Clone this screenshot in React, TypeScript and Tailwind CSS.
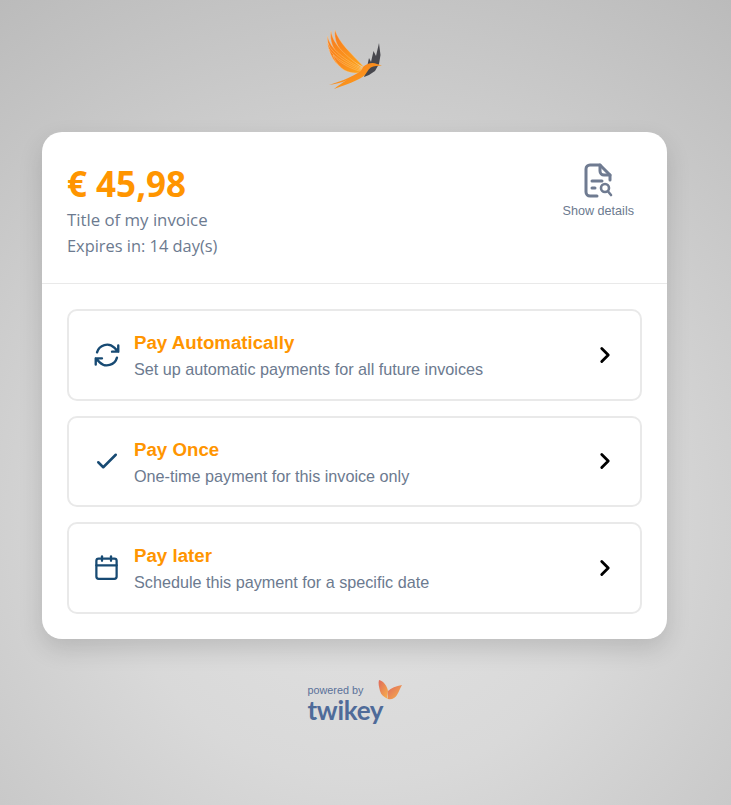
import React from 'react';
import { ChevronRight, Calendar } from 'lucide-react';
import { HiOutlineArrowPath } from 'react-icons/hi2';
import { HiOutlineCheck } from 'react-icons/hi';

const options = [
  { title: 'Pay Automatically', text: 'Set up automatic payments for all future invoices', icon: <HiOutlineArrowPath className="w-[30px] h-[30px] [&_path]:[stroke-width:1.9px]" /> },
  { title: 'Pay Once', text: 'One-time payment for this invoice only', icon: <HiOutlineCheck className="w-[30px] h-[30px]" /> },
  { title: 'Pay later', text: 'Schedule this payment for a specific date', icon: <Calendar size={27} strokeWidth={2} className="ml-[1px] mr-[2px] -mt-[1px]" /> },
];

const feathers = [
  'M34 15C38 28 50 38 63 52C48 46 32 34 34 15Z',
  'M30 16C32 30 46 42 62 53C44 49 27 36 30 16Z',
  'M26.5 21C29 34 44 45 62 54C42 52 26 40 26.5 21Z',
  'M26.5 28C31 39 46 48 62 55C42 55 29 45 26.5 28Z',
  'M28 34C34 44 48 51 62 56C44 58 32 50 28 34Z',
  'M32 40C38 48 50 54 62 57C46 61 36 52 32 40Z',
];

function Bird() {
  return (
    <svg width="56" height="62" viewBox="26 13 56 62" fill="none">
      <defs>
        <linearGradient id="wing" x1="0" y1="0" x2="1" y2="1">
          <stop offset="0" stopColor="#f8791e" />
          <stop offset="1" stopColor="#fca61c" />
        </linearGradient>
      </defs>
      <path d="M63 62L66 52L68 43L70 47L72.5 36L75 41L78 28L79.5 40L78 49L74 56L68 60Z" fill="#47474d" />
      {feathers.map((d) => (
        <path key={d} d={d} fill="url(#wing)" stroke="#fcc98a" strokeWidth="0.4" />
      ))}
      <path d="M62 52C66 48 72 47 76 49L81 50.5L75 51C71 51 68 53 66 57C64 61 60 63 56 65C48 69 40 71 33 74C38 70 41 68 46 65C40 68 34 69 28 70C38 67 48 63 55 59C59 57 61 55 62 52Z" fill="url(#wing)" />
    </svg>
  );
}

function DetailsIcon() {
  return (
    <svg width="30" height="36" viewBox="0 0 30 36" fill="none" stroke="#6f7b91" strokeWidth="3" strokeLinecap="round" strokeLinejoin="round">
      <path d="M14 33H7a4 4 0 0 1-4-4V6a4 4 0 0 1 4-4h10l10 10v5" />
      <path d="M17 2v6a4 4 0 0 0 4 4h6" />
      <path d="M9 18h10" />
      <path d="M9 25h3" />
      <circle cx="22" cy="25" r="4" strokeWidth="2.6" />
      <path d="M25.5 29l2.5 3" strokeWidth="2.6" />
    </svg>
  );
}

function Butterfly() {
  return (
    <svg width="24" height="20" viewBox="0 0 24 20">
      <defs>
        <linearGradient id="fly" x1="0" y1="0" x2="1" y2="1">
          <stop offset="0" stopColor="#df6a5c" />
          <stop offset="1" stopColor="#f8b24c" />
        </linearGradient>
      </defs>
      <path d="M1 0C5 1 9 5 10 11C9 15 9 17 10 19C6 17 3 15 2 11C1 7 0 3 1 0Z" fill="url(#fly)" />
      <path d="M10 11C13 8 18 6 24 5C22 8 21 12 19 15C17 18 14 20 10 19C10 16 9 14 10 11Z" fill="url(#fly)" />
    </svg>
  );
}

export default function App() {
  return (
    <div className="min-h-[805px] w-full bg-[radial-gradient(circle_at_50%_65%,#e2e2e2_0%,#d9d9d9_40%,#bbbbbb_100%)] font-['Liberation_Sans',sans-serif]">
      <div className="w-[709px] pt-[28px] flex flex-col items-center">
        <Bird />
        <div className="mt-[42px] w-[625px] rounded-[20px] bg-white shadow-[0_10px_25px_rgba(0,0,0,0.14)]">
          <div className="h-[152px] border-b border-[#e9e9e9] pl-[25px] pr-[33px] pt-[29px] flex justify-between">
            <div className="font-['Open_Sans',sans-serif]">
              <div className="text-[35px] leading-[46px] font-bold text-[#ff9500]">€ 45,98</div>
              <div className="text-[16.8px] leading-[26px] text-[#6c7a8f]">Title of my invoice</div>
              <div className="text-[16.4px] leading-[26px] text-[#6c7a8f]">Expires in: 14 day(s)</div>
            </div>
            <div className="flex flex-col items-center pt-[2px]">
              <DetailsIcon />
              <span className="mt-[4px] text-[12.6px] leading-[16px] text-[#6c7a8f]">Show details</span>
            </div>
          </div>
          <div className="px-[25px] py-[25px] flex flex-col gap-[15px]">
            {options.map(({ title, text, icon }) => (
              <div key={title} className="h-[91.5px] rounded-[10px] border-2 border-[#e9e9e9] flex items-center pl-[23px] pr-[22px]">
                <span className="text-[#174a73] shrink-0">{icon}</span>
                <div className="ml-[12px] flex-1 pt-[2px]">
                  <div className="text-[18.7px] leading-[27px] font-bold text-[#ff9500]">{title}</div>
                  <div className="text-[16.2px] leading-[26px] text-[#6c7a8f]">{text}</div>
                </div>
                <ChevronRight size={26} strokeWidth={2.6} className="text-black shrink-0" />
              </div>
            ))}
          </div>
        </div>
        <div className="mt-[44px] flex flex-col w-[94px]">
          <div className="flex items-start justify-between h-[17px]">
            <span className="text-[10.8px] leading-[12px] mt-[1px] text-[#5a7199]">powered by</span>
            <span className="-mt-[3px]"><Butterfly /></span>
          </div>
          <span className="font-['Lato',sans-serif] font-bold text-[26px] leading-[20px] tracking-[-0.3px] text-[#4f6b99]">twikey</span>
        </div>
      </div>
    </div>
  );
}
